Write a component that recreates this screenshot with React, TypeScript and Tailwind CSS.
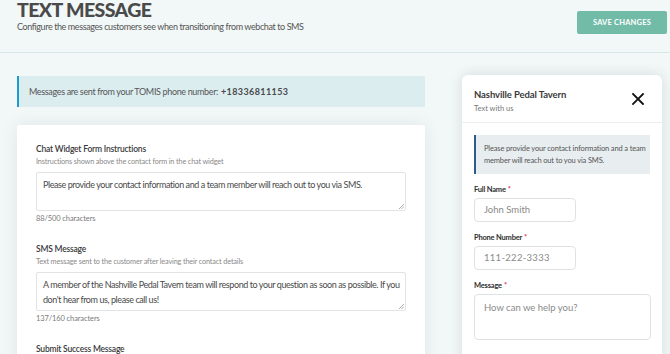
import React from "react";

const font = { fontFamily: "Lato, 'Open Sans', sans-serif" };

function Field({
  label,
  hint,
  value,
  count,
}: {
  label: string;
  hint: string;
  value: string;
  count: string;
}) {
  return (
    <div className="mb-[19px]">
      <div className="text-[8.5px] font-semibold text-[#3a3a3a] leading-[13px] tracking-[-0.2px]">{label}</div>
      <div className="text-[7.3px] text-[#8a8a8a] leading-[11px] tracking-[-0.15px]">{hint}</div>
      <div className="relative mt-[5px] h-[39px] border border-[#e2e4e4] rounded-[2px] pl-[6px] pr-[2px] pt-[4px] text-[9px] leading-[15px] text-[#4a4a4a] tracking-[-0.42px]">
        {value}
        <svg className="absolute right-[1px] bottom-[1px]" width="5" height="5" viewBox="0 0 5 5">
          <path d="M5 0 L0 5 M5 2.5 L2.5 5" stroke="#9a9a9a" strokeWidth="0.8" />
        </svg>
      </div>
      <div className="text-[7.5px] text-[#7a7a7a] leading-[11px] mt-[2px] tracking-[-0.1px]">{count}</div>
    </div>
  );
}

function Label({ children }: { children: React.ReactNode }) {
  return (
    <div className="text-[7.5px] font-bold text-[#2e2e2e] leading-[11px] tracking-[-0.2px]">
      {children}
      <span className="text-[#e0344a] ml-[2px]">*</span>
    </div>
  );
}

export default function App() {
  return (
    <div className="w-[670px] h-[354px] overflow-hidden bg-[#f2f7f7]" style={font}>
      <div className="flex justify-between items-start h-[53px] border-b border-[#d4e8e5]">
        <div className="pl-[17px]">
          <h1 className="text-[19.5px] font-black text-[#4a4a4a] tracking-[-0.6px] leading-[20px]">TEXT MESSAGE</h1>
          <p className="text-[9px] text-[#555] leading-[12px] mt-[1px] tracking-[-0.4px]">
            Configure the messages customers see when transitioning from webchat to SMS
          </p>
        </div>
        <button className="mt-[11px] mr-[3px] w-[90px] h-[23px] rounded-[2px] bg-[#72bba7] text-white text-[7.5px] font-bold tracking-[0.2px] uppercase">
          Save Changes
        </button>
      </div>

      <div className="flex">
        <div className="ml-[17px] w-[408px] pt-[23px]">
          <div className="h-[31px] bg-[#dcedf0] border-l-[2px] border-[#1e9cd0] flex items-center pl-[10px] text-[9px] text-[#555] tracking-[-0.35px]">
            Messages are sent from your TOMIS phone number:
            <span className="ml-[3px] font-bold text-[#4a4a4a] tracking-[0.4px]">+18336811153</span>
          </div>
          <div className="mt-[18px] bg-white rounded-t-[2px] shadow-[0_0_18px_rgba(0,40,40,0.08)] px-[19px] pt-[18px] h-[260px]">
            <Field
              label="Chat Widget Form Instructions"
              hint="Instructions shown above the contact form in the chat widget"
              value="Please provide your contact information and a team member will reach out to you via SMS."
              count="88/500 characters"
            />
            <Field
              label="SMS Message"
              hint="Text message sent to the customer after leaving their contact details"
              value="A member of the Nashville Pedal Tavern team will respond to your question as soon as possible. If you don't hear from us, please call us!"
              count="137/160 characters"
            />
            <div className="text-[8.5px] font-semibold text-[#3a3a3a] leading-[13px] tracking-[-0.2px] mt-[4px]">Submit Success Message</div>
          </div>
        </div>

        <div className="ml-[37px] mt-[22px] w-[200px] h-[300px] bg-white rounded-t-[6px] shadow-[0_0_14px_rgba(0,40,40,0.12)]">
          <div className="h-[48px] border-b border-[#eceeee] flex justify-between pl-[12px] pr-[18px] pt-[13px]">
            <div>
              <div className="text-[9.5px] font-bold text-[#3a3a3a] leading-[14px] tracking-[-0.1px]">Nashville Pedal Tavern</div>
              <div className="text-[7.5px] text-[#777] leading-[11px] mt-[1px]">Text with us</div>
            </div>
            <svg className="mt-[5px]" width="12" height="12" viewBox="0 0 12 12">
              <path d="M1 1 L11 11 M11 1 L1 11" stroke="#111" strokeWidth="1.8" strokeLinecap="square" />
            </svg>
          </div>
          <div className="px-[12px] pt-[12px]">
            <div className="h-[39px] bg-[#e8edf0] border-l-[2px] border-[#2e5c86] pl-[8px] pr-[4px] pt-[8px] text-[7.5px] leading-[12px] text-[#555] tracking-[-0.15px]">
              Please provide your contact information and a team member will reach out to you via SMS.
            </div>
            <div className="mt-[10px]">
              <Label>Full Name</Label>
              <div className="mt-[3px] w-[102px] h-[24px] border border-[#e0e2e2] rounded-[4px] flex items-center pl-[9px] text-[9.5px] text-[#8a8a8a]">
                John Smith
              </div>
            </div>
            <div className="mt-[10px]">
              <Label>Phone Number</Label>
              <div className="mt-[3px] w-[102px] h-[24px] border border-[#e0e2e2] rounded-[4px] flex items-center pl-[9px] text-[9.5px] text-[#8a8a8a] tracking-[0.3px]">
                111-222-3333
              </div>
            </div>
            <div className="mt-[10px]">
              <Label>Message</Label>
              <div className="mt-[3px] w-[177px] h-[46px] border border-[#e0e2e2] rounded-[4px] pl-[9px] pt-[6px] text-[9.5px] text-[#8a8a8a]">
                How can we help you?
              </div>
            </div>
          </div>
        </div>
      </div>
    </div>
  );
}
